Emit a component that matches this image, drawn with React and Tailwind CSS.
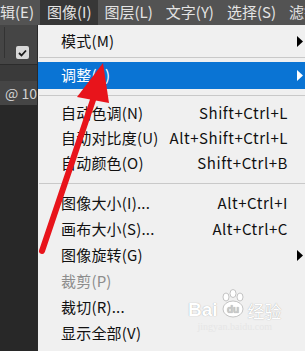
const font = "font-['Microsoft_YaHei','Noto_Sans_CJK_SC',sans-serif]"

const menuBar = [
  { label: '辑(E)' },
  { label: '图像(I)', active: true },
  { label: '图层(L)' },
  { label: '文字(Y)' },
  { label: '选择(S)' },
  { label: '滤镜(T)' },
]

function Caret({ white }) {
  return (
    <svg width="6" height="11" viewBox="0 0 6 11" className="block">
      <path d="M0 0 L6 5.5 L0 11 Z" fill={white ? '#ffffff' : '#000000'} />
    </svg>
  )
}

function Item({ label, shortcut, sub, disabled, active, h = 'h-[26px]' }) {
  return (
    <div
      className={`flex ${h} items-center pl-[23px] ${
        active ? 'bg-[#0a74d4] text-white' : disabled ? 'text-[#8d8d8d]' : 'text-[#111]'
      }`}
    >
      <span className="flex-1 whitespace-nowrap tracking-[0.2px]">{label}</span>
      {shortcut && <span className="whitespace-nowrap tracking-[0.55px]">{shortcut}</span>}
      <span className="flex w-[17px] shrink-0 pl-[9px]">{sub && <Caret white={active} />}</span>
    </div>
  )
}

function Sep({ top, bottom }) {
  return (
    <div style={{ paddingTop: top, paddingBottom: bottom }}>
      <div className="ml-[1px] border-t border-[#c9c9c9]" />
    </div>
  )
}

function Arrow() {
  // red annotation arrow drawn over the screenshot
  return (
    <svg className="pointer-events-none absolute inset-0" width="305" height="351" viewBox="0 0 305 351">
      <path d="M42 251 L94 97" stroke="#e8141b" strokeWidth="6" strokeLinecap="round" />
      <path d="M103 63 L77 97 L109 103 Z" fill="#e8141b" />
    </svg>
  )
}

function Watermark() {
  return (
    <div className="pointer-events-none absolute left-[188px] top-[289px] flex flex-col items-center">
      <div className="flex items-end text-[19px] leading-none font-bold text-white [text-shadow:0_0_1px_#9a9a9a]">
        <span className="font-['Liberation_Sans',sans-serif]">Bai</span>
        <svg width="28" height="30" viewBox="0 0 28 30" className="mx-[1px]">
          <g fill="#fff" stroke="#b5b5b5" strokeWidth="0.8">
            <ellipse cx="7" cy="8" rx="3" ry="4" />
            <ellipse cx="14" cy="4.5" rx="3" ry="4" />
            <ellipse cx="21" cy="8" rx="3" ry="4" />
            <ellipse cx="14" cy="20" rx="10" ry="8" />
          </g>
          <text x="14" y="24" textAnchor="middle" fontSize="10" fontWeight="700" fill="#c9c9c9" fontFamily="Liberation Sans, sans-serif">du</text>
        </svg>
        <span className={`${font} text-[17px] font-normal`}>经验</span>
      </div>
      <span className="mt-[3px] font-['Liberation_Serif',serif] text-[10px] leading-none text-[#e6e6e6]">jingyan.baidu.com</span>
    </div>
  )
}

export default function App() {
  return (
    <div className={`relative flex h-[351px] w-[305px] flex-col overflow-hidden bg-[#282828] text-[15px] ${font}`}>
      <div className="flex h-[25px] shrink-0 items-center bg-[#535353] text-[#e4e4e4]">
        {menuBar.map((m, i) => (
          <div
            key={m.label}
            className={`flex h-full shrink-0 items-center whitespace-nowrap px-[6.5px] ${i === 0 ? '-ml-[6.5px]' : ''} ${
              m.active ? 'bg-[#373737]' : ''
            }`}
          >
            {m.label}
          </div>
        ))}
      </div>

      <div className="flex min-h-0 flex-1">
        <div className="flex w-[37px] shrink-0 flex-col">
          <div className="flex h-[39px] items-end bg-[#454545] pb-[5px]">
            <div className="ml-[4px] h-[31px] w-px self-center bg-[#333]" />
            <div className="ml-[11px] grid h-[13px] w-[13px] place-items-center rounded-[2px] bg-[#d8d8d8]">
              <svg width="9" height="8" viewBox="0 0 9 8">
                <path d="M1 4 L3.5 6.5 L8 1.5" stroke="#1a1a1a" strokeWidth="1.8" fill="none" />
              </svg>
            </div>
          </div>
          <div className="h-[17px] border-t border-[#2c2c2c] bg-[#3a3a3a]" />
          <div className="flex h-[24px] items-center bg-[#454545] pl-[5px] text-[14px] whitespace-nowrap text-[#d2d2d2]">
            @ 10
          </div>
          <div className="flex-1 bg-[#282828]" />
        </div>

        <div className="flex-1 border-l border-[#2a2a2a] bg-[#f0f0f0] pt-[3px]">
          <Item label="模式(M)" sub />
          <Sep top={3} bottom={4} />
          <Item label="调整(J)" sub active h="h-[27px]" />
          <Sep top={6} bottom={5} />
          <Item label="自动色调(N)" shortcut="Shift+Ctrl+L" h="h-[25px]" />
          <Item label="自动对比度(U)" shortcut="Alt+Shift+Ctrl+L" h="h-[25px]" />
          <Item label="自动颜色(O)" shortcut="Shift+Ctrl+B" h="h-[25px]" />
          <Sep top={7} bottom={6} />
          <Item label="图像大小(I)..." shortcut="Alt+Ctrl+I" />
          <Item label="画布大小(S)..." shortcut="Alt+Ctrl+C" />
          <Item label="图像旋转(G)" sub />
          <Item label="裁剪(P)" disabled />
          <Item label="裁切(R)..." />
          <Item label="显示全部(V)" />
        </div>
      </div>

      <Watermark />
      <Arrow />
    </div>
  )
}
